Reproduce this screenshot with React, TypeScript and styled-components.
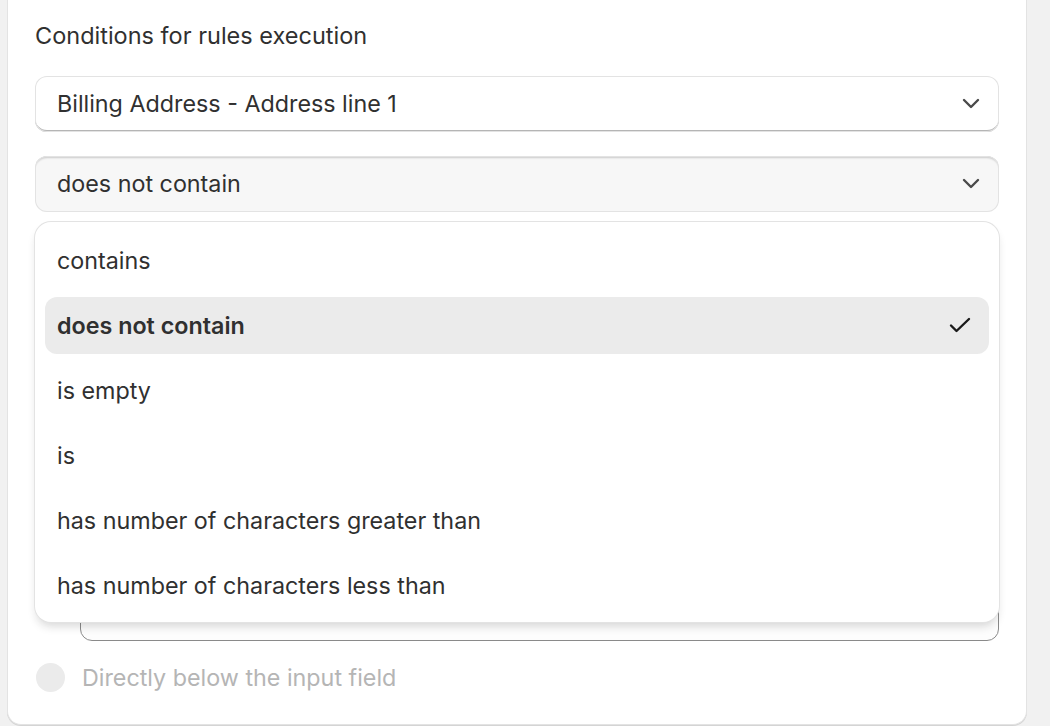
import { createGlobalStyle } from "styled-components";
import styled from "styled-components";

const GlobalStyle = createGlobalStyle`
  html, body {
    margin: 0;
    padding: 0;
    background: #f1f1f1;
    font-family: Inter, "Noto Sans", "Liberation Sans", sans-serif;
    color: #303030;
    overflow: hidden;
  }
`;

const Page = styled.div`
  height: 726px;
  padding: 0 23px 1px 7px;
  box-sizing: border-box;
  display: flex;
`;

const Card = styled.section`
  flex: 1;
  background: #ffffff;
  border: 1px solid #e3e3e3;
  border-top: none;
  border-radius: 0 0 14px 14px;
  box-shadow: 0 1px 0 0 #d4d4d4;
  padding: 22px 27px 34px 27px;
  display: flex;
  flex-direction: column;
`;

const Title = styled.h2`
  margin: 0 0 26px;
  font-size: 23.5px;
  line-height: 28px;
  font-weight: 400;
  color: #303030;
`;

const Stack = styled.div`
  display: flex;
  flex-direction: column;
  gap: 24px;
`;

const SelectWrap = styled.div`
  position: relative;
`;

const SelectButton = styled.button<{ $pressed?: boolean }>`
  width: 100%;
  height: 56px;
  display: flex;
  align-items: center;
  justify-content: space-between;
  padding: 0 19px 2px 22px;
  border: none;
  border-radius: 12px;
  font-family: inherit;
  font-size: 23.3px;
  color: #303030;
  text-align: left;
  cursor: pointer;
  background: ${(p) => (p.$pressed ? "#f7f7f7" : "#ffffff")};
  box-shadow: ${(p) =>
    p.$pressed
      ? "inset 0 0 0 1px #e3e3e3, inset 0 3px 2px -1px rgba(26,26,26,0.2)"
      : "inset 0 0 0 1px #e3e3e3, inset 0 -2px 0 0 #b5b5b5"};
`;

const Chevron = () => (
  <svg width="18" height="11" viewBox="0 0 18 11" fill="none">
    <path d="M2 2l7 7 7-7" stroke="#4a4a4a" strokeWidth="2.4" strokeLinecap="round" strokeLinejoin="round" />
  </svg>
);

const Check = () => (
  <svg width="22" height="17" viewBox="0 0 22 17" fill="none">
    <path d="M2 8.5l5.5 5.5L20 2" stroke="#1a1a1a" strokeWidth="2.4" strokeLinecap="round" strokeLinejoin="round" />
  </svg>
);

const Popover = styled.ul`
  position: absolute;
  z-index: 10;
  top: calc(100% + 10px);
  left: 0;
  right: 0;
  margin: 0;
  padding: 10px 10px 8px;
  list-style: none;
  background: #ffffff;
  border-radius: 16px;
  box-shadow: 0 0 0 1px #e3e3e3, 0 6px 10px -2px rgba(26, 26, 26, 0.18);
  display: flex;
  flex-direction: column;
  gap: 8px;
`;

const Option = styled.li<{ $selected?: boolean }>`
  height: 57px;
  display: flex;
  align-items: center;
  justify-content: space-between;
  padding: 0 18px 0 12px;
  border-radius: 12px;
  font-size: 23.3px;
  color: #303030;
  font-weight: ${(p) => (p.$selected ? 600 : 400)};
  background: ${(p) => (p.$selected ? "#ebebeb" : "transparent")};
`;

const RadioRow = styled.label<{ $disabled?: boolean }>`
  display: flex;
  align-items: center;
  gap: 17px;
  font-size: 23.3px;
  line-height: 29px;
  color: ${(p) => (p.$disabled ? "#b5b5b5" : "#303030")};
`;

const RadioDot = styled.span<{ $disabled?: boolean }>`
  width: 29px;
  height: 29px;
  border-radius: 50%;
  margin-left: 1px;
  box-sizing: border-box;
  background: ${(p) => (p.$disabled ? "#ebebeb" : "#ffffff")};
  border: ${(p) => (p.$disabled ? "none" : "1.5px solid #8a8a8a")};
`;

const Indented = styled.div`
  margin: 16px 0 0 45px;
`;

const TextBox = styled.div`
  height: 360px;
  box-sizing: border-box;
  border: 1px solid #8a8a8a;
  border-radius: 12px;
  background: #fdfdfd;
`;

const LastRadio = styled.div`
  margin-top: 22px;
`;

const operators = [
  "contains",
  "does not contain",
  "is empty",
  "is",
  "has number of characters greater than",
  "has number of characters less than",
];

export default function App() {
  const selected = "does not contain";
  return (
    <>
      <GlobalStyle />
      <Page>
        <Card>
          <Title>Conditions for rules execution</Title>
          <Stack>
            <SelectWrap>
              <SelectButton>
                <span>Billing Address - Address line 1</span>
                <Chevron />
              </SelectButton>
            </SelectWrap>
            <SelectWrap>
              <SelectButton $pressed>
                <span>{selected}</span>
                <Chevron />
              </SelectButton>
              <Popover>
                {operators.map((op) => (
                  <Option key={op} $selected={op === selected}>
                    <span>{op}</span>
                    {op === selected && <Check />}
                  </Option>
                ))}
              </Popover>
            </SelectWrap>
            <div>
              <RadioRow>
                <RadioDot />
              </RadioRow>
              <Indented>
                <TextBox />
              </Indented>
            </div>
          </Stack>
          <LastRadio>
            <RadioRow $disabled>
              <RadioDot $disabled />
              Directly below the input field
            </RadioRow>
          </LastRadio>
        </Card>
      </Page>
    </>
  );
}
